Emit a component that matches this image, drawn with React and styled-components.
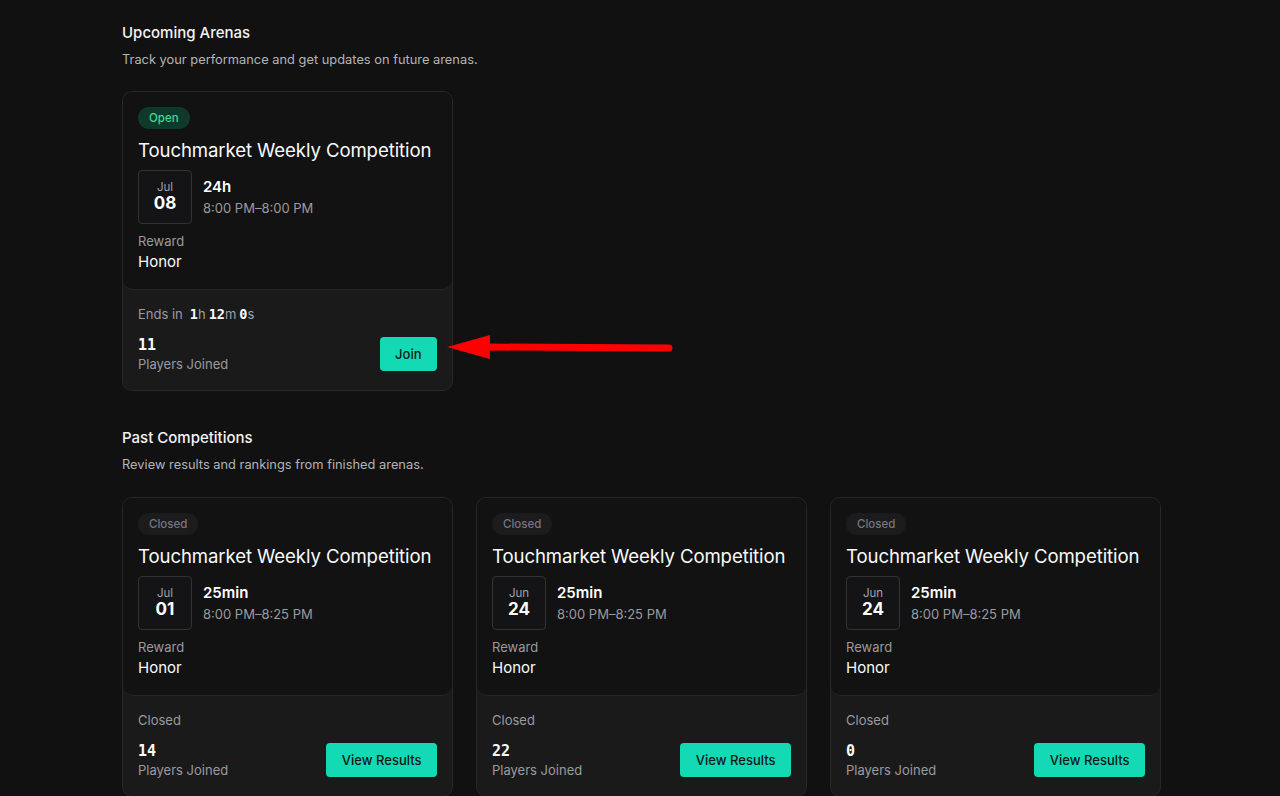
import React from "react";
import styled, { createGlobalStyle } from "styled-components";

const Global = createGlobalStyle`
  html, body { margin: 0; padding: 0; background: #111111; }
  body { font-family: Inter, "Noto Sans", sans-serif; color: #fff; -webkit-font-smoothing: antialiased; }
  * { box-sizing: border-box; }
`;

const Page = styled.div`
  width: 1039px;
  margin: 0 0 0 122px;
  padding-top: 23px;
  position: relative;
`;

const Section = styled.section`
  display: flex;
  flex-direction: column;
  margin-bottom: ${(p) => p.$mb || 0}px;
`;

const Heading = styled.h2`
  margin: 0;
  font-size: 15px;
  font-weight: 500;
  line-height: 20px;
  color: #f4f4f5;
`;

const Sub = styled.p`
  margin: 8px 0 0;
  font-size: 12.85px;
  line-height: 18px;
  color: #b4b4b8;
`;

const Grid = styled.div`
  display: grid;
  grid-template-columns: repeat(3, 331px);
  column-gap: 23px;
  margin-top: ${(p) => p.$mt || 22}px;
`;

const Card = styled.div`
  background: #1a1a1a;
  border: 1px solid #272727;
  border-radius: 10px;
  display: flex;
  flex-direction: column;
  overflow: hidden;
`;

const Top = styled.div`
  background: #121212;
  border-bottom: 1px solid #262626;
  border-radius: 0 0 10px 10px;
  padding: 15px 15px 17px;
  display: flex;
  flex-direction: column;
`;

const Badge = styled.span`
  align-self: flex-start;
  height: 22px;
  padding: 0 11px;
  border-radius: 11px;
  font-size: 11.5px;
  font-weight: 500;
  line-height: 22px;
  background: ${(p) => (p.$open ? "#0f3a2b" : "#1c1c1e")};
  color: ${(p) => (p.$open ? "#3ddc97" : "#76767c")};
`;

const Title = styled.h3`
  margin: 9px 0 0;
  font-size: 18.6px;
  font-weight: 400;
  line-height: 24px;
  letter-spacing: -0.1px;
  color: #fafafa;
`;

const DateRow = styled.div`
  display: flex;
  gap: 11px;
  margin-top: 8px;
`;

const DateBox = styled.div`
  width: 54px;
  height: 54px;
  border: 1px solid #333336;
  border-radius: 4px;
  background: #141416;
  display: flex;
  flex-direction: column;
  align-items: center;
  justify-content: center;
`;

const Month = styled.span`
  font-size: 11.5px;
  line-height: 13px;
  color: #a1a1aa;
`;

const Day = styled.span`
  font-size: 17px;
  font-weight: 700;
  line-height: 19px;
  color: #fff;
`;

const TimeCol = styled.div`
  display: flex;
  flex-direction: column;
  padding-top: 8px;
`;

const Duration = styled.span`
  font-size: 15px;
  font-weight: 600;
  line-height: 18px;
  color: #fff;
`;

const TimeRange = styled.span`
  margin-top: 3px;
  font-size: 13px;
  line-height: 18px;
  color: #9a9aa0;
`;

const Label = styled.span`
  margin-top: ${(p) => p.$mt || 0}px;
  font-size: 13px;
  line-height: 18px;
  color: #9a9aa0;
`;

const Value = styled.span`
  margin-top: 2px;
  font-size: 15px;
  line-height: 20px;
  color: #fafafa;
`;

const Bottom = styled.div`
  padding: 15px 15px 17px;
  display: flex;
  flex-direction: column;
`;

const Ends = styled.div`
  font-size: 13px;
  line-height: 18px;
  color: #9a9aa0;
  display: flex;
  align-items: baseline;
`;

const Mono = styled.span`
  font-family: "DejaVu Sans Mono", "Liberation Mono", monospace;
  font-weight: 600;
  color: #fafafa;
  font-size: 13.5px;
  margin-left: ${(p) => p.$ml || 0}px;
`;

const Unit = styled.span`
  color: #a1a1aa;
  margin-right: 3px;
`;

const FootRow = styled.div`
  display: flex;
  justify-content: space-between;
  align-items: center;
  margin-top: 12px;
`;

const Count = styled.div`
  display: flex;
  flex-direction: column;
`;

const CountNum = styled.span`
  font-family: "DejaVu Sans Mono", "Liberation Mono", monospace;
  font-size: 15px;
  font-weight: 600;
  line-height: 20px;
  color: #fafafa;
`;

const Button = styled.button`
  height: 34px;
  padding: 0 15.5px;
  border: none;
  border-radius: 4px;
  background: #14d9b5;
  color: #0b1a17;
  font-family: Inter, sans-serif;
  font-size: 13px;
  font-weight: 500;
  cursor: pointer;
`;

const Arrow = styled.svg`
  position: absolute;
  left: 325px;
  top: 333px;
  width: 230px;
  height: 30px;
`;

function ArenaCard({ status, month, day, duration, range, count, ends, action }) {
  const open = status === "Open";
  return (
    <Card>
      <Top>
        <Badge $open={open}>{status}</Badge>
        <Title>Touchmarket Weekly Competition</Title>
        <DateRow>
          <DateBox>
            <Month>{month}</Month>
            <Day>{day}</Day>
          </DateBox>
          <TimeCol>
            <Duration>{duration}</Duration>
            <TimeRange>{range}</TimeRange>
          </TimeCol>
        </DateRow>
        <Label $mt={8}>Reward</Label>
        <Value>Honor</Value>
      </Top>
      <Bottom>
        {ends ? (
          <Ends>
            Ends in
            <Mono $ml={7}>1</Mono>
            <Unit>h</Unit>
            <Mono>12</Mono>
            <Unit>m</Unit>
            <Mono>0</Mono>
            <Unit>s</Unit>
          </Ends>
        ) : (
          <Label>Closed</Label>
        )}
        <FootRow>
          <Count>
            <CountNum>{count}</CountNum>
            <Label>Players Joined</Label>
          </Count>
          <Button>{action}</Button>
        </FootRow>
      </Bottom>
    </Card>
  );
}

export default function App() {
  return (
    <>
      <Global />
      <Page>
        <Section $mb={37}>
          <Heading>Upcoming Arenas</Heading>
          <Sub>Track your performance and get updates on future arenas.</Sub>
          <Grid $mt={22}>
            <ArenaCard
              status="Open"
              month="Jul"
              day="08"
              duration="24h"
              range="8:00 PM–8:00 PM"
              count="11"
              ends
              action="Join"
            />
          </Grid>
        </Section>
        <Section>
          <Heading>Past Competitions</Heading>
          <Sub>Review results and rankings from finished arenas.</Sub>
          <Grid $mt={23}>
            <ArenaCard status="Closed" month="Jul" day="01" duration="25min" range="8:00 PM–8:25 PM" count="14" action="View Results" />
            <ArenaCard status="Closed" month="Jun" day="24" duration="25min" range="8:00 PM–8:25 PM" count="22" action="View Results" />
            <ArenaCard status="Closed" month="Jun" day="24" duration="25min" range="8:00 PM–8:25 PM" count="0" action="View Results" />
          </Grid>
        </Section>
        <Arrow viewBox="0 0 230 30">
          <path d="M0 14 L43 2 L43 26 Z" fill="#ff0000" />
          <line x1="40" y1="14" x2="222" y2="15" stroke="#ff0000" strokeWidth="7" strokeLinecap="round" />
        </Arrow>
      </Page>
    </>
  );
}
